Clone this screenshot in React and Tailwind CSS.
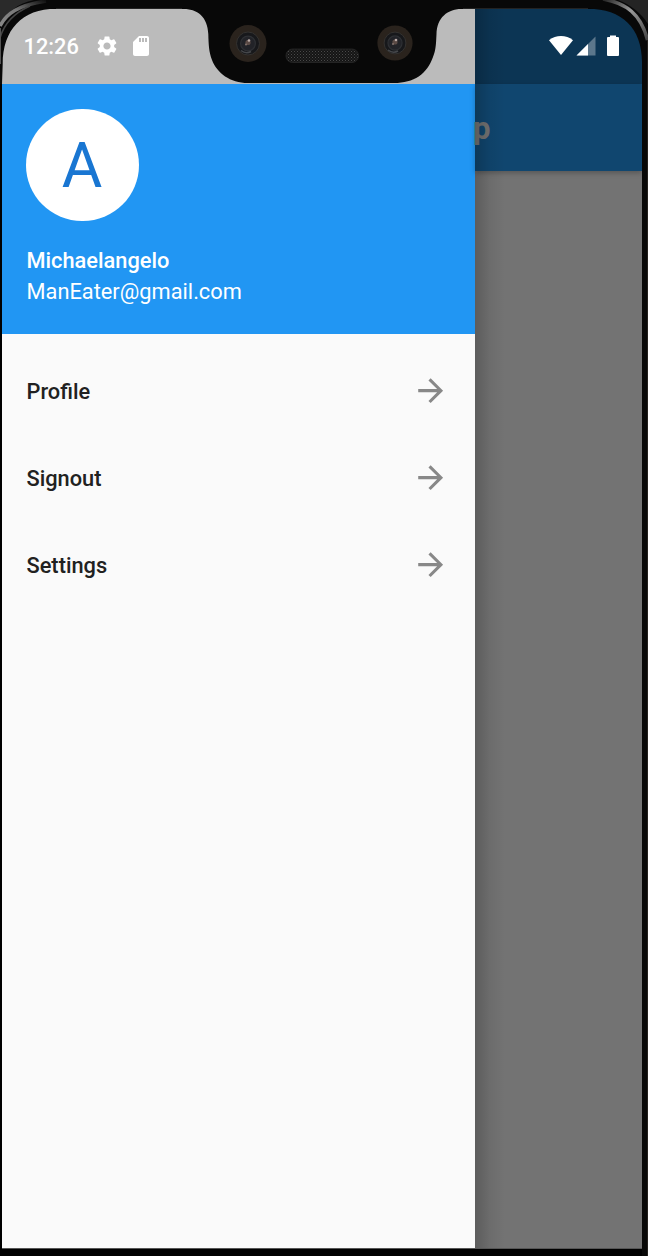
import React from "react";
import { MdArrowForward, MdSdCard, MdSettings } from "react-icons/md";

const items = ["Profile", "Signout", "Settings"];

function Lens({ cx, cy, r }) {
  return (
    <g>
      <circle cx={cx} cy={cy} r={r} fill="#2a231d" />
      <circle cx={cx} cy={cy} r={r * 0.62} fill="#17181b" stroke="#343230" strokeWidth="1" />
      <circle cx={cx} cy={cy} r={r * 0.4} fill="#222328" stroke="#2e3034" strokeWidth="1.2" />
      <path d={`M${cx - 7} ${cy + 7}q5 4 10 1`} stroke="#45474a" strokeWidth="1.6" fill="none" />
      <circle cx={cx} cy={cy - 1} r="2.6" fill="#5a4a45" />
      <circle cx={cx + 1} cy={cy - 3} r="1.3" fill="#b9aaa6" />
      <circle cx={cx - 2} cy={cy + 1} r="1" fill="#82726d" />
    </g>
  );
}

function Bezel() {
  return (
    <svg className="pointer-events-none absolute inset-0" width="648" height="1256" viewBox="0 0 648 1256">
      <defs>
        <pattern id="mesh" width="3" height="3" patternUnits="userSpaceOnUse">
          <rect width="3" height="3" fill="#151515" />
          <rect width="1" height="1" fill="#4a4a4a" />
          <rect x="1.5" y="1.5" width="1" height="1" fill="#373737" />
        </pattern>
        <linearGradient id="gleamL" x1="0" y1="1" x2="1" y2="0">
          <stop offset="0" stopColor="#8a8a8a" />
          <stop offset="0.5" stopColor="#777" />
          <stop offset="1" stopColor="#111" />
        </linearGradient>
        <linearGradient id="gleamR" x1="0" y1="0" x2="1" y2="1">
          <stop offset="0" stopColor="#222" />
          <stop offset="0.45" stopColor="#999" />
          <stop offset="1" stopColor="#444" />
        </linearGradient>
      </defs>
      <path
        fill="#080808"
        fillRule="evenodd"
        d="M0 0H648V84H0ZM2 84H642V62C642 28 622 8.700 588 8.700H463C447 8.700 437 18 436.500 34C436 43 436 50 433 57C427 74 414 83 394 83H248C230 83 217 73 212 60C209 52 208.600 45 208.300 34C207.500 17 198 8.700 182 8.700H56C22 8.700 2.700 30 2.700 64Z"
      />
      <path d="M0 0H34C18 3 6 13 0 25Z" fill="#2a2a2a" />
      <path d="M0 26C6 14 18 5 46 1" fill="none" stroke="url(#gleamL)" strokeWidth="3.500" />
      <path d="M0 38C4 24 14 13 30 6" fill="none" stroke="#444" strokeWidth="1.500" />
      <path d="M0.500 28V64" stroke="#555" strokeWidth="1" />
      <path d="M618 0H648V24C641 13 631 5 618 0Z" fill="#242424" />
      <path d="M603 -1C626 3 641 14 647.500 40" fill="none" stroke="url(#gleamR)" strokeWidth="3.500" />
      <path d="M56 8.500H182M463 8.500H588" stroke="#303030" strokeWidth="0.700" />
      <path d="M642 84H648V1256H642Z" fill="#080807" />
      <path d="M647.500 40V1256" stroke="#24211d" strokeWidth="1" />
      <Lens cx={248} cy={43.500} r={18.500} />
      <Lens cx={395} cy={43} r={17.600} />
      <rect x="286" y="49" width="72.500" height="13.500" rx="6.500" fill="url(#mesh)" stroke="#292929" strokeWidth="0.800" />
    </svg>
  );
}

function Drawer() {
  return (
    <aside className="flex w-[472.600px] shrink-0 flex-col bg-[#fafafa]">
      <div className="flex h-[75px] items-center bg-[#bbbbbb] pl-[21.500px] text-white">
        <span className="w-[71.500px] text-[21.800px] leading-none font-medium">12:26</span>
        <MdSettings size={24} className="-mt-[1px] shrink-0" />
        <MdSdCard size={24} className="-mt-[1px] ml-[10px] shrink-0" />
      </div>
      <header className="flex h-[250.300px] flex-col bg-[#2196f3] pt-[24.500px] pl-[24.500px] text-[21.800px] leading-[25px] text-white">
        <div className="-ml-[0.100px] flex size-[112.200px] items-center justify-center rounded-full bg-white pt-[3px] pr-[1px] text-[62.200px] leading-none text-[#1976d2]">
          A
        </div>
        <p className="mt-[27.300px] font-medium">Michaelangelo</p>
        <p className="mt-[6px]">ManEater@gmail.com</p>
      </header>
      <nav className="flex flex-col pt-[12.700px]">
        {items.map((label) => (
          <a key={label} className="flex h-[87.100px] items-center justify-between pr-[25px] pl-[24.500px] text-[21.800px] leading-none font-medium text-[#212121]">
            <span className="pt-[2px]">{label}</span>
            <MdArrowForward size={37.3} className="text-[#888888]" />
          </a>
        ))}
      </nav>
    </aside>
  );
}

function DimmedPage() {
  return (
    <main className="relative flex min-w-0 flex-1 flex-col bg-[#737373]">
      <div className="flex h-[75px] items-center justify-end bg-[#0c3554] pr-[20px]">
        <svg width="76" height="24" viewBox="546 34 76 24" fill="#fff" className="-mt-[1px]">
          <path d="M549 40.200C556 34.700 566 34.700 573 40.200L561 55Z" />
          <path d="M595.500 36.500V55.500H576.500Z" fillOpacity="0.330" />
          <path d="M588 44V55.500H576.500Z" />
          <path d="M610 35.500h6v1.600h2a1 1 0 0 1 1 1V55a1 1 0 0 1-1 1h-10a1 1 0 0 1-1-1V38.100a1 1 0 0 1 1-1h2Z" />
        </svg>
      </div>
      <div className="flex h-[87px] items-center bg-[#10466f] pt-[3px] shadow-[0_2px_5px_rgba(0,0,0,0.25)]">
        <span className="-ml-[1.500px] text-[31.100px] leading-none font-bold text-[#737373]">p</span>
      </div>
      <div className="absolute inset-y-0 left-0 w-[30px] bg-linear-to-r from-black/20 via-black/6 to-transparent" />
    </main>
  );
}

export default function App() {
  return (
    <div className="relative h-[1256px] w-[648px] overflow-hidden bg-black pt-[9px] pl-[2px] font-['Roboto',sans-serif]">
      <div className="flex h-[1239.500px] w-[640px] border-b border-[#555555]">
        <Drawer />
        <DimmedPage />
      </div>
      <Bezel />
    </div>
  );
}
